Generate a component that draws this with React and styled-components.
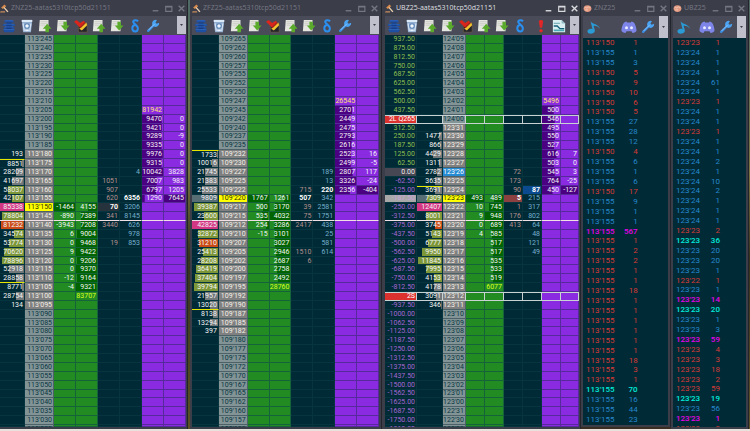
import React from 'react';
import styled, { createGlobalStyle, css } from 'styled-components';

const GlobalStyle = createGlobalStyle`
  * { box-sizing: border-box; }
  html, body { margin: 0; padding: 0; }
  body {
    background: #e9e2dc;
    font-family: Roboto, sans-serif;
    overflow: hidden;
  }
  button { border: 0; padding: 0; background: none; color: inherit; display: flex; }
`;

const Desktop = styled.main`
  display: grid;
  grid-template-columns: 188fr 2px 192fr 199fr 90fr 78fr 1px;
  height: 100vh;
  border-bottom: 2px solid #e9e2dc;
  background: #3a2d22;
`;

const Frame = styled.section`
  min-width: 0;
  min-height: 0;
  display: flex;
  flex-direction: column;
  background: #3b3d49;
  padding: 0 ${p => p.$right}px 2px ${p => p.$left}px;
  border-right: 1px solid #23242c;
  margin-bottom: ${p => p.$lift || 0}px;
`;

const Strip = styled.div`
  background: linear-gradient(#4d6a66, #77743f 40%, #35321e 60%, #5b5226);
`;

const TitleBar = styled.header`
  display: flex;
  align-items: center;
  height: 16px;
  flex: none;
  gap: 2px;
  color: ${p => (p.$active ? '#d9dade' : '#747681')};
`;

const Title = styled.h1`
  margin: 0;
  flex: 1;
  min-width: 0;
  overflow: hidden;
  white-space: nowrap;
  font: 400 7px/12px "Noto Sans", sans-serif;
`;

const WindowButtons = styled.div`
  display: flex;
  gap: 4px;
`;

const ToolBar = styled.nav`
  display: flex;
  align-items: center;
  height: ${p => p.$height}px;
  flex: none;
  background: #494b58;
  padding-left: ${p => p.$indent}px;
  gap: 4px;
`;

const ToolGroup = styled.div`
  display: flex;
  gap: 4px;
  margin-left: 3px;
`;

const Spacer = styled.span`
  flex: 1;
`;

const More = styled.button`
  flex: none;
  width: 9px;
  height: ${p => p.$height}px;
  margin-left: auto;
  align-self: flex-start;
  align-items: center;
  justify-content: center;
  background: #bfc0cb;
  color: #3b3d49;
`;

const Ladder = styled.table`
  flex: 1;
  min-height: 0;
  display: flex;
  background: #002b36;
  overflow: hidden;
  font-size: 7px;
  line-height: 8px;
  color: #f4f5f5;
`;

const LadderBody = styled.tbody`
  flex: 1;
  min-width: 0;
  display: grid;
  grid-template-rows: repeat(44, minmax(0, 1fr)) 2px;
`;

const Cell = styled.td`
  display: flex;
  align-items: center;
  justify-content: flex-end;
  min-width: 0;
  min-height: 0;
  padding: 0 1px 0 0;
  white-space: nowrap;
  background: no-repeat ${p => (p.$from === 'left' ? 'left' : 'right')} top;
  background-color: ${p => p.$bg || 'transparent'};
  color: ${p => p.$color || 'inherit'};
  font-weight: ${p => (p.$bold ? 700 : 400)};
  border-right: 1px solid ${p => p.$grid || '#06343f'};
  border-bottom: 1px solid ${p => p.$grid || '#06343f'};
  ${p => p.$mark === 'top' && css`border-top: 1px solid #e6e600;`}
  ${p => p.$mark === 'bottom' && css`border-bottom: 1px solid #e6e600;`}
  ${p => p.$boxed && css`
    border-color: #c9d2d2;
    border-top: 1px solid #c9d2d2;
  `}
`;

const LadderRow = styled.tr`
  display: grid;
  grid-template-columns: ${p => p.$columns};
  min-height: 0;
  overflow: hidden;
  ${p => p.$line && css`
    ${Cell} { border-bottom-color: #f0e0e6; }
  `}

  &:last-child ${Cell} { align-items: flex-start; }
`;

const Tape = styled.table`
  flex: 1;
  min-height: 0;
  display: flex;
  overflow: hidden;
  background: #002b36;
  font: 8px/9px Roboto, sans-serif;
`;

const TapeBody = styled.tbody`
  flex: 1;
  display: grid;
  grid-template-rows: repeat(39, minmax(0, 1fr)) ${p => p.$rest}px;
`;

const TapeRow = styled.tr`
  display: grid;
  grid-template-columns: 33fr 21fr 30fr;
  align-items: start;
  min-height: 0;
  overflow: hidden;
  color: ${p => p.$color};
  font-weight: ${p => (p.$bold ? 500 : 400)};

  td { padding: 0 0 0 3px; }
  td + td { padding: 0; text-align: right; }
`;

/* ---------- icons ---------- */

const Icon = ({ size = 14, children }) => (
  <svg width={size} height={size} viewBox="0 0 16 16" aria-hidden="true">{children}</svg>
);

const Hammer = () => (
  <Icon size={9}>
    <path d="M2 6 8 1l3 3-6 5z" fill="#d98a4b" />
    <path d="m7 6 7 8" stroke="#e8cfae" strokeWidth="2.6" />
    <path d="M1 13h8v2H0z" fill="#c98b5c" />
  </Icon>
);
const Brain = () => (
  <Icon size={9}>
    <path d="M1 8c0-4 3-6 7-6s7 2 7 6-3 6-7 6-7-2-7-6z" fill="#e39a80" />
    <path d="M3 7c2-3 3 2 5-1s3 2 5 0M4 11c2-2 3 1 5-1" stroke="#f7d0bf" strokeWidth="1.5" fill="none" />
  </Icon>
);
const Layers = () => (
  <Icon>
    <path d="M4 1h8l2 3H2zM1 6h14v2H1zM2 9h12v2H2zM1 12h14l-2 3H3z" fill="#1d4fa3" />
    <path d="M5 4h6v8H5z" fill="#173f87" />
    <path d="M3 2h10M2 6h12M3 9h10M2 12h12" stroke="#2f66bd" />
  </Icon>
);
const Bin = () => (
  <Icon>
    <path d="M2 1h12l-1.500 14h-9z" fill="#8fabcf" />
    <path d="M2 1h12v2.500H2z" fill="#dce9f6" />
    <path d="m3.500 5 1.500 9M12.500 5 11 14" stroke="#d3e2f2" strokeWidth="1.5" />
    <circle cx="8" cy="8" r="2.600" fill="#eef5fc" stroke="#5d84b6" strokeWidth="1.200" />
    <path d="M6 12h4v2H6z" fill="#e8f1fa" />
  </Icon>
);
const Sheet = ({ down }) => (
  <Icon>
    <path d="M2 1h10v13H1z" fill="#e4e6df" />
    <path d="M3 3h8M3 5h8M3 7h5" stroke="#c9ccc4" />
    <path d={down ? 'M8.500 3h4v4.500h3l-5 5.500-5-5.500h3z' : 'M8.500 15h4v-4h3l-5-5.500-5 5.500h3z'} fill="#5aab2b" />
  </Icon>
);
const Eraser = () => (
  <Icon>
    <path d="M5 5h10v10H5z" fill="#23232a" stroke="#7d6a42" strokeWidth=".600" />
    <path d="m0 3 3-2 4 3.500L11 2l2 2-6 6z" fill="#d9261c" />
    <path d="m6 11 8-7 1 3-6 6z" fill="#f4c430" />
    <path d="m7 10 6-6" stroke="#a3241c" strokeWidth="1.500" />
  </Icon>
);
const Delta = () => (
  <Icon>
    <path d="M11.500 2.600C9.500.6 5.600 1.200 6 3.600c.4 2.200 5.300 3.400 5.300 7 0 2.400-1.300 3.700-3.200 3.700S4.900 12.900 4.900 10.700c0-2.500 1.700-3.900 4-3.900" fill="none" stroke="#2b8ff0" strokeWidth="2.300" />
  </Icon>
);
const Wrench = () => (
  <Icon>
    <path d="M2.500 13.500 10 6" stroke="#3a8be0" strokeWidth="2.800" strokeLinecap="round" />
    <path d="M12.500 1.300A4 4 0 1 0 14.900 4.200L12.200 5.300 10.800 3.900z" fill="#4ba3f2" />
    <path d="M3 12.500 9.500 6" stroke="#9bd0fb" />
  </Icon>
);
const Alert = () => (
  <Icon>
    <path d="M5.500 2Q8 0 10.500 2L9.300 10H6.700z" fill="#e32626" />
    <circle cx="8" cy="13.300" r="2" fill="#e32626" />
  </Icon>
);
const Report = () => (
  <Icon>
    <path d="M1 1h10l4 4v10H1z" fill="#d9eef0" />
    <path d="M11 1v4h4z" fill="#8fbcc4" />
    <path d="M2 5h7" stroke="#7cb3bd" strokeWidth="1.500" />
    <path d="M2 12h12v2H2z" fill="#4aa9b6" />
    <path d="m2 8 4 0 3 3 5 0" stroke="#14607a" strokeWidth="1.600" fill="none" />
  </Icon>
);
const Note = () => (
  <Icon>
    <path d="M4 1c2 4 9 3 11 9-3-3-5-3.500-7.500-3.300L9 12c.5 4-8 5-8.500 1.500C.3 10.500 4 9.500 6.300 10.500z" fill="#2a9bd4" />
  </Icon>
);
const Discord = () => (
  <Icon size={16}>
    <path d="M5.500 2.500 4 3C2 4 .5 8 .5 12c1 1.300 2.500 2 4 2l1-1.700h5l1 1.700c1.500 0 3-.7 4-2C15.500 8 14 4 12 3l-1.500-.5-.6 1H6.100z" fill="#7d86e8" />
    <circle cx="5.500" cy="8.700" r="1.500" fill="#e9ebff" />
    <circle cx="10.500" cy="8.700" r="1.500" fill="#e9ebff" />
  </Icon>
);

const Tool = ({ label, children }) => (
  <button type="button" aria-label={label}>{children}</button>
);

const WindowControls = () => (
  <WindowButtons>
    <Tool label="Minimize"><Icon size={9}><path d="M3 12h10" stroke="currentColor" strokeWidth="2.500" /></Icon></Tool>
    <Tool label="Maximize"><Icon size={9}><path d="M3 4h11v9H3zM3 5h11" stroke="currentColor" strokeWidth="2" fill="none" /></Icon></Tool>
    <Tool label="Close"><Icon size={9}><path d="m3 3 10 10M13 3 3 13" stroke="currentColor" strokeWidth="2.500" /></Icon></Tool>
  </WindowButtons>
);

const MoreButton = ({ height }) => (
  <More type="button" aria-label="More tools" $height={height}>
    <svg width="3" height="2" viewBox="0 0 3 2"><path d="M0 0h3L1.500 2z" fill="currentColor" /></svg>
  </More>
);

/* ---------- price ladders ---------- */

const OLIVE = '#7c9638';
const PINK = '#d33682';
const ORANGE = '#cb4b16';
const GREY = '#73797b';
const SLATE = '#586e75';

// row: [volume, volume colour, bid, ask, sell, buy, profile, delta]
const znRows = {
  8: [, , , , , , 81942],
  9: [, , , , , , 9470, 0],
  10: [, , , , , , 9421, 0],
  11: [, , , , , , 9289, -9],
  12: [, , , , , , 9335, 0],
  13: [193, GREY, , , , , 9976, 0],
  14: [8851, GREY, , , , , 9315, 0],
  15: [28209, GREY, , , , 4, 10042, 3828],
  16: [41697, GREY, , , 1051, , 7007, 983],
  17: [58037, OLIVE, , , 907, , 6797, 1205],
  18: [42107, OLIVE, , , 620, 6356, 1290, 7645],
  19: [85338, PINK, -1464, 4155, 70, 3206],
  20: [78804, OLIVE, -890, 7389, 341, 8145],
  21: [81232, ORANGE, -3943, 7208, 3440, 626],
  22: [34574, OLIVE, 6, 9004, , 978],
  23: [53774, OLIVE, 0, 9468, 19, 853],
  24: [70620, OLIVE, 9, 9422],
  25: [78896, OLIVE, 0, 9206],
  26: [52918, GREY, 0, 9370],
  27: [28858, GREY, -12, 9164],
  28: [8771, GREY, -4, 9321],
  29: [28754, GREY, , 83707],
  30: [134, GREY],
};

const zfRows = {
  7: [, , , , , , 26545],
  8: [, , , , , , 2701],
  9: [, , , , , , 2449],
  10: [, , , , , , 2475],
  11: [, , , , , , 2793],
  12: [, , , , , , 2616],
  13: [1733, GREY, , , , , 2523, 16],
  14: [10016, GREY, , , , , 2499, -5],
  15: [21745, GREY, , , , 189, 2807, 117],
  16: [21383, GREY, , , , 13, 3326, -24],
  17: [25533, GREY, , , 715, 220, 2356, -404],
  18: [9809, SLATE, 1767, 1261, 507, 342],
  19: [39387, OLIVE, 500, 3170, 39, 2581],
  20: [23600, OLIVE, 535, 4032, 75, 1751],
  21: [42825, PINK, 254, 3286, 2417, 438],
  22: [32872, OLIVE, -15, 3101, , 25],
  23: [31210, ORANGE, , 3027, , 581],
  24: [25413, OLIVE, , 2946, 1510, 614],
  25: [28208, OLIVE, , 2687, 6],
  26: [36419, OLIVE, , 2758],
  27: [37404, OLIVE, , 2492],
  28: [39794, OLIVE, , 28760],
  29: [21957, GREY],
  30: [13020, GREY],
  31: [8138, GREY],
  32: [13294, GREY],
  33: [397, GREY],
};

const ubRows = {
  7: [, , , , , , 5496],
  8: [, , , , , , 500],
  9: [, , , , , , 546],
  10: [, , , , , , 495],
  11: [1477, GREY, , , , , 550],
  12: [866, GREY, , , , , 527],
  13: [4429, GREY, , , , , 616, 7],
  14: [1311, GREY, , , , , 503, 0],
  15: [2782, GREY, , , 72, , 545, 3],
  16: [3635, GREY, , , 173, , 764, -25],
  17: [3691, GREY, , , 90, 87, 450, -127],
  18: [7309, OLIVE, 493, 489, 5, 215],
  19: [12407, PINK, 10, 745, 1, 317],
  20: [8001, OLIVE, 9, 948, 176, 802],
  21: [3745, ORANGE, 0, 689, 413, 64],
  22: [5143, OLIVE, 4, 585, , 48],
  23: [6777, OLIVE, , 517, , 121],
  24: [9950, OLIVE, , 517, , 49],
  25: [11845, OLIVE, , 535],
  26: [7995, OLIVE, , 533],
  27: [4153, OLIVE, , 519],
  28: [4178, GREY, , 6077],
  29: [3091, GREY],
  30: [346, GREY],
};

const pad = (n, len) => String(n).padStart(len, '0');

const indexes = [...Array(45).keys()];
const znPrices = indexes.map(i => `113'${pad(245 - i * 5, 3)}`);
const zfPrices = indexes.map(i => `109'${Math.floor(265 - i * 2.5)}`);
const ubPrices = indexes.map(i => {
  const ticks = 124 * 32 + 9 - i;
  return `${Math.floor(ticks / 32)}'${pad(ticks % 32, 2)}`;
});

const fill = (color, value, max) => ({
  backgroundImage: `linear-gradient(${color}, ${color})`,
  backgroundSize: `${Math.min(100, Math.round((Math.abs(value) / max) * 100))}% 100%`,
});

const GREEN_GRID = '#14633a';
const PURPLE_GRID = '#572a9c';

function PriceLadder({ book }) {
  const { rows, prices, columns, max, lit, last, total, marks, profit, boxed = [] } = book;

  return (
    <Ladder>
      <LadderBody>
        {indexes.map(i => {
          const [vol, volColor, bid, ask, sell, buy, profile, delta] = rows[i] || [];
          const isLit = i >= lit[0] && i <= lit[1];
          const isTotal = i === total.ask;
          const box = boxed.includes(i);
          let priceBg = isLit ? '#808080' : '#839496';
          let priceColor = isLit ? '#f4f1e8' : '#073642';
          if (i === last) {
            priceBg = '#ffff00';
            priceColor = '#333300';
          }
          if (i === book.open) {
            priceBg = '#268bd2';
            priceColor = '#ffffff';
          }
          const bidBar = bid > 0 || bid === -1464 ? fill('#006400', bid, max.bid) : undefined;
          return (
            <LadderRow key={i} $columns={columns} $line={i === 20}>
              {profit && <Cell {...profit(i)} $boxed={box} />}
              <Cell
                $mark={marks[i]}
                $boxed={box}
                $bg={i === last ? book.volBg : undefined}
                style={vol ? fill(volColor, vol, i === last && !profit ? vol : max.vol) : undefined}
              >
                {vol}
              </Cell>
              <Cell $bg={priceBg} $color={priceColor} $grid="#4c6268" $boxed={box}>{prices[i]}</Cell>
              <Cell $bg="#228b22" $grid={GREEN_GRID} $boxed={box} style={bidBar}>{bid}</Cell>
              <Cell
                $bg="#228b22"
                $grid={GREEN_GRID}
                $boxed={box}
                $color={isTotal && '#d8ff1f'}
                style={ask && !isTotal ? fill('#006400', ask, max.ask) : undefined}
              >
                {ask}
              </Cell>
              <Cell
                $bold={i === last}
                $boxed={box}
                $color={i === last ? '#ffffff' : '#b58f8f'}
                $bg={i === last ? book.sellBg : undefined}
              >
                {sell}
              </Cell>
              <Cell
                $bold={i === last - 1}
                $boxed={box}
                $color={i === last - 1 ? '#ffffff' : '#76afcf'}
                $bg={i === last - 1 ? book.buyBg : undefined}
              >
                {buy}
              </Cell>
              <Cell
                $from="left"
                $bg="#8a2be2"
                $grid={PURPLE_GRID}
                $boxed={box}
                $color={i === total.profile && '#ffe36e'}
                style={profile && i !== total.profile ? fill('#4b0082', profile, max.profile) : undefined}
              >
                {profile}
              </Cell>
              <Cell $bg={i === last - 1 ? '#4b0082' : '#8a2be2'} $grid={PURPLE_GRID} $boxed={box}>{delta}</Cell>
            </LadderRow>
          );
        })}
      </LadderBody>
    </Ladder>
  );
}

// open profit per price level, with the two working orders
const ubProfit = i => {
  if (i === 9) return { children: '2L Q265', $bg: '#dc322f', $color: '#ffffff' };
  if (i === 29) return { children: '2S', $bg: '#dc322f', $color: '#ffffff' };
  const value = 937.5 - i * 62.5;
  const props = { children: value.toFixed(2), $color: value > 0 ? '#8fbf50' : '#a866d2' };
  if (value === 0) return { ...props, $bg: '#474653', $color: '#f0f0f0' };
  if (i === 18) return { ...props, $bg: '#a8a8a8', $color: '#c9a6d8' };
  return props;
};

const znBook = {
  rows: znRows,
  prices: znPrices,
  columns: '25fr 29fr 22fr 22fr 22fr 22fr 22fr 22fr',
  max: { vol: 85338, bid: 1464, ask: 9468, profile: 10042 },
  lit: [13, 30],
  last: 19,
  total: { ask: 29, profile: 8 },
  marks: { 14: 'top', 27: 'bottom' },
  sellBg: '#26333c',
};

const zfBook = {
  rows: zfRows,
  prices: zfPrices,
  columns: '27fr 29fr 22fr 22fr 22fr 22fr 22fr 22fr',
  max: { vol: 42825, bid: 1767, ask: 4032, profile: 3326 },
  lit: [13, 33],
  last: 18,
  total: { ask: 28, profile: 7 },
  marks: { 13: 'top', 30: 'bottom' },
};

const ubBook = {
  rows: ubRows,
  prices: ubPrices,
  columns: '32fr 26fr 23fr 19fr 19fr 19fr 19fr 19fr 18fr',
  max: { vol: 12407, bid: 493, ask: 948, profile: 764 },
  lit: [10, 30],
  last: 18,
  open: 15,
  total: { ask: 28, profile: 7 },
  marks: { 17: 'top', 29: 'bottom' },
  profit: ubProfit,
  boxed: [9, 29],
  volBg: SLATE,
  sellBg: '#8c4040',
  buyBg: '#0b4a8f',
};

function LadderWindow({ title, book, active, left, right }) {
  return (
    <Frame $left={left} $right={right}>
      <TitleBar $active={active}>
        <Hammer />
        <Title>{title}</Title>
        <WindowControls />
      </TitleBar>
      <ToolBar $height={19} $indent={2}>
        <Tool label="Depth"><Layers /></Tool>
        <Tool label="Clear"><Bin /></Tool>
        <Tool label="Load bids"><Sheet /></Tool>
        <Tool label="Save bids"><Sheet down /></Tool>
        <Tool label="Erase"><Eraser /></Tool>
        <Tool label="Load asks"><Sheet /></Tool>
        <Tool label="Save asks"><Sheet down /></Tool>
        <Tool label="Delta"><Delta /></Tool>
        {active ? (
          <ToolGroup>
            <Tool label="Alerts"><Alert /></Tool>
            <Tool label="Report"><Report /></Tool>
          </ToolGroup>
        ) : (
          <Tool label="Settings"><Wrench /></Tool>
        )}
        <MoreButton height={18} />
      </ToolBar>
      <PriceLadder book={book} />
    </Frame>
  );
}

/* ---------- time and sales ---------- */

const tones = {
  r: '#d63a36',
  b: '#2687cd',
  m: '#e800e8',
  c: '#00ecdc',
};

const znTape = `150 1 r,155 1 b,155 3 b,150 5 r,150 9 r,150 10 r,150 6 r,150 5 r,155 27 b,155 28 b,155 12 b,150 4 r,155 6 b,
155 1 b,155 6 b,150 17 r,155 9 b,155 1 b,155 1 b,155 567 m,155 1 r,155 2 r,155 2 r,155 1 r,155 1 r,155 18 r,155 1 r,
155 1 r,155 1 r,155 1 r,155 1 r,155 1 r,155 18 r,155 3 r,155 1 r,155 70 c,155 16 b,155 44 b,155 23 b`;

const ubTape = `23 1 r,24 1 b,24 1 b,24 1 b,24 61 b,24 1 b,23 1 r,24 1 b,24 1 b,23 1 r,24 1 b,24 1 b,24 2 b,24 1 b,
24 10 b,24 2 b,24 1 b,24 1 b,24 1 b,23 2 r,23 36 c,23 20 b,23 20 b,23 1 b,22 1 r,23 1 b,23 14 m,23 20 c,23 1 b,23 3 b,
23 59 m,23 4 r,23 3 r,23 18 r,23 2 r,23 59 r,23 19 c,23 56 b,23 1 m,23 2 r`;

const parseTape = (text, handle) => text.split(',').map(line => {
  const [tick, size, tone] = line.trim().split(' ');
  return { price: `${handle}'${tick}`, size, tone };
});

function TapeWindow({ title, trades, lift, rest }) {
  return (
    <Frame $left={2} $right={2} $lift={lift}>
      <TitleBar>
        <Brain />
        <Title>{title}</Title>
        <WindowControls />
      </TitleBar>
      <ToolBar $height={22} $indent={4}>
        <Tool label="Sound"><Note /></Tool>
        <Spacer />
        <Tool label="Discord"><Discord /></Tool>
        <Tool label="Settings"><Wrench /></Tool>
        <MoreButton height={22} />
      </ToolBar>
      <Tape>
        <TapeBody $rest={rest}>
          {trades.map((trade, i) => (
            <TapeRow key={i} $color={tones[trade.tone]} $bold={trade.tone === 'm' || trade.tone === 'c'}>
              <td>{trade.price}</td>
              <td>{trade.size}</td>
            </TapeRow>
          ))}
        </TapeBody>
      </Tape>
    </Frame>
  );
}

export default function App() {
  return (
    <>
      <GlobalStyle />
      <Desktop>
        <LadderWindow title="ZNZ25-aatas5310tcp50d21151" book={znBook} left={0} right={1} />
        <Strip />
        <LadderWindow title="ZFZ25-aatas5310tcp50d21151" book={zfBook} left={2} right={2} />
        <LadderWindow title="UBZ25-aatas5310tcp50d21151" book={ubBook} active left={3} right={1} />
        <TapeWindow title="ZNZ25" trades={parseTape(znTape, 113)} lift={2} rest={0} />
        <TapeWindow title="UBZ25" trades={parseTape(ubTape, 123)} rest={3} />
        <Strip />
      </Desktop>
    </>
  );
}
